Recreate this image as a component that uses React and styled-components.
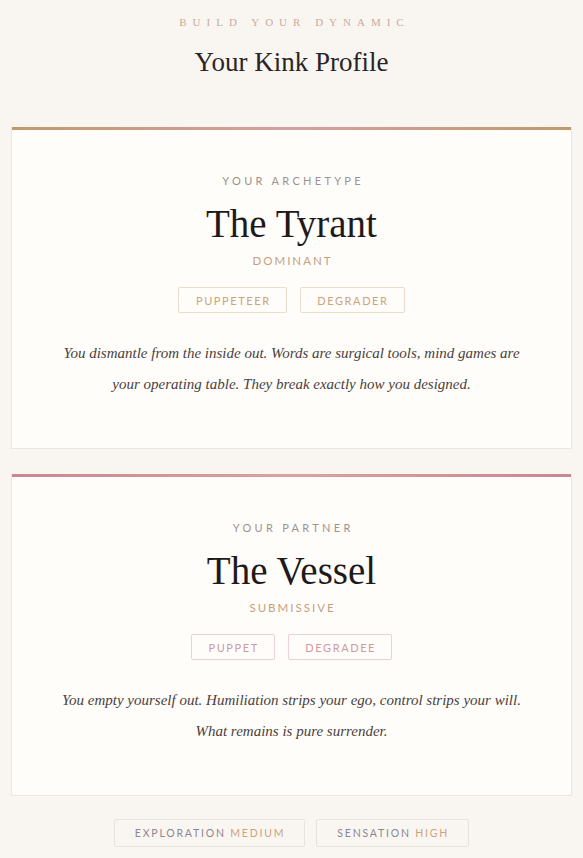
import React from "react";
import styled, { createGlobalStyle } from "styled-components";

const GlobalStyle = createGlobalStyle`
  html, body {
    margin: 0;
    padding: 0;
    background: #f9f6f2;
  }
  * { box-sizing: border-box; }
`;

const serif = `"Liberation Serif", "Times New Roman", serif`;
const sans = `Lato, "Open Sans", Arial, sans-serif`;

const Page = styled.div`
  min-height: 858px;
  padding: 15px 11px 40px 11px;
  display: flex;
  flex-direction: column;
  align-items: stretch;
`;

const Header = styled.header`
  display: flex;
  flex-direction: column;
  align-items: center;
  margin-bottom: 49px;
`;

const Overline = styled.div`
  font-family: ${serif};
  font-size: 11px;
  line-height: 14px;
  letter-spacing: 6px;
  text-transform: uppercase;
  color: #c9ab9c;
  padding-left: 6px;
`;

const PageTitle = styled.h1`
  margin: 17px 0 0 0;
  font-family: ${serif};
  font-weight: 400;
  font-size: 27px;
  line-height: 32px;
  color: #2a2424;
`;

const Cards = styled.div`
  display: flex;
  flex-direction: column;
  gap: 25px;
`;

const Card = styled.section`
  background-color: #fffdfa;
  background-image: ${(p) => p.$accent};
  background-size: 100% 3px;
  background-repeat: no-repeat;
  background-position: top left;
  border: 1px solid #ebe6e0;
  border-top: none;
  padding: 47px 36px 48px 36px;
  display: flex;
  flex-direction: column;
  align-items: center;
  text-align: center;
`;

const Label = styled.div`
  font-family: ${sans};
  font-size: 11px;
  line-height: 14px;
  letter-spacing: 3.3px;
  padding-left: 3.3px;
  text-transform: uppercase;
  color: #9d928f;
`;

const Name = styled.h2`
  margin: 13px 0 0 0;
  font-family: ${serif};
  font-weight: 400;
  font-size: 39px;
  line-height: 46px;
  color: #1e1a1a;
`;

const Role = styled.div`
  margin-top: 7px;
  font-family: ${sans};
  font-size: 11.5px;
  line-height: 14px;
  letter-spacing: 2px;
  padding-left: 2px;
  text-transform: uppercase;
  color: #c4a07e;
`;

const Tags = styled.div`
  margin-top: 19px;
  display: flex;
  gap: 13px;
  justify-content: center;
`;

const Tag = styled.span`
  height: 26px;
  display: inline-flex;
  align-items: center;
  padding: 0 15px 0 16.5px;
  border: 1px solid ${(p) => (p.$tone === "rose" ? "#efd0d3" : "#eddcca")};
  border-radius: 2px;
  font-family: ${sans};
  font-size: 11px;
  letter-spacing: 1.6px;
  text-transform: uppercase;
  color: ${(p) => (p.$tone === "rose" ? "#cf9aa1" : "#c9a47f")};
`;

const Description = styled.p`
  margin: 25px 0 0 0;
  max-width: 480px;
  font-family: ${serif};
  font-style: italic;
  font-size: 15px;
  line-height: 31px;
  color: #4a3f40;
`;

const Stats = styled.div`
  margin-top: 23px;
  display: flex;
  justify-content: center;
  gap: 11px;
`;

const Stat = styled.div`
  height: 28px;
  display: inline-flex;
  align-items: center;
  padding: 0 19px 0 20px;
  border: 1px solid #e9e3dd;
  border-radius: 2px;
  background: #f9f6f2;
  font-family: ${sans};
  font-size: 10.5px;
  letter-spacing: 1.8px;
  text-transform: uppercase;
  color: #8e8791;
`;

const StatValue = styled.span`
  color: #c9a47f;
`;

const profiles = [
  {
    label: "Your Archetype",
    name: "The Tyrant",
    role: "Dominant",
    tags: ["Puppeteer", "Degrader"],
    tone: "gold",
    accent: "linear-gradient(90deg, #c09a6b 0%, #d4a09f 50%, #c09a6b 100%)",
    text:
      "You dismantle from the inside out. Words are surgical tools, mind games are your operating table. They break exactly how you designed.",
  },
  {
    label: "Your Partner",
    name: "The Vessel",
    role: "Submissive",
    tags: ["Puppet", "Degradee"],
    tone: "rose",
    accent: "linear-gradient(90deg, #c9878f 0%, #d8a2a2 50%, #c9878f 100%)",
    text:
      "You empty yourself out. Humiliation strips your ego, control strips your will. What remains is pure surrender.",
  },
];

export default function App() {
  return (
    <>
      <GlobalStyle />
      <Page>
        <Header>
          <Overline>Build your dynamic</Overline>
          <PageTitle>Your Kink Profile</PageTitle>
        </Header>
        <Cards>
          {profiles.map((p) => (
            <Card key={p.name} $accent={p.accent}>
              <Label>{p.label}</Label>
              <Name>{p.name}</Name>
              <Role>{p.role}</Role>
              <Tags>
                {p.tags.map((t) => (
                  <Tag key={t} $tone={p.tone}>
                    {t}
                  </Tag>
                ))}
              </Tags>
              <Description>{p.text}</Description>
            </Card>
          ))}
        </Cards>
        <Stats>
          <Stat>
            Exploration&nbsp;<StatValue>Medium</StatValue>
          </Stat>
          <Stat>
            Sensation&nbsp;<StatValue>High</StatValue>
          </Stat>
        </Stats>
      </Page>
    </>
  );
}
